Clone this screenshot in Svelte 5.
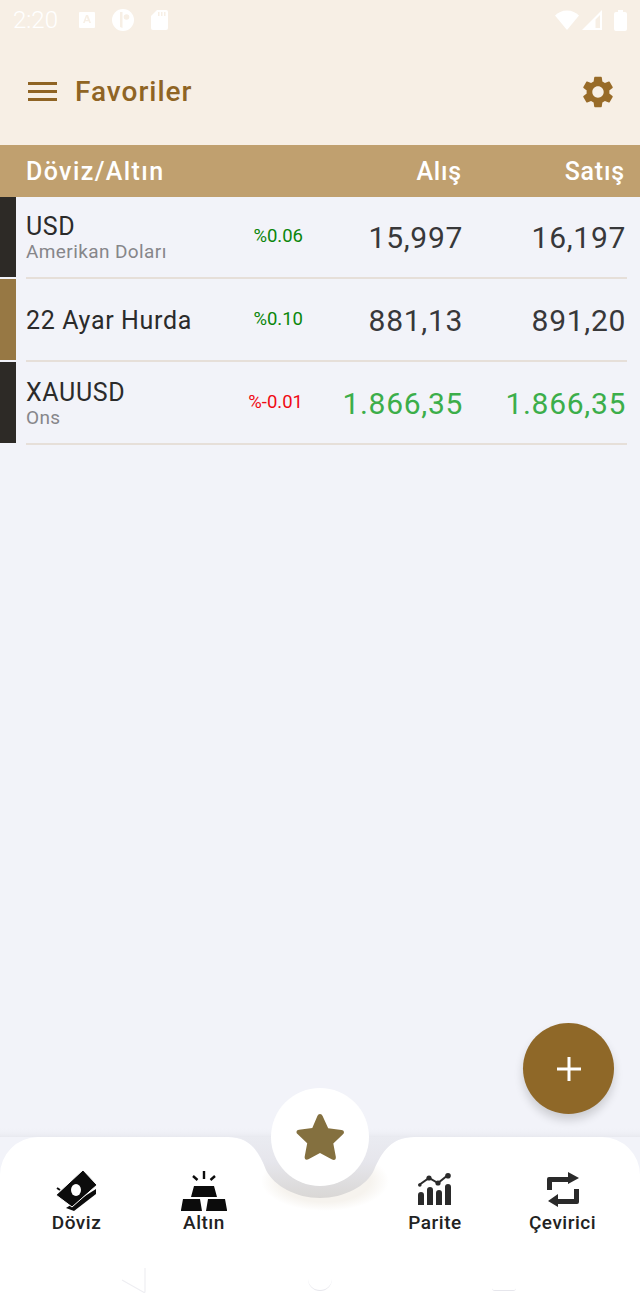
<script>
  const rows = [
    { code: 'USD', name: 'Amerikan Doları', pct: '%0.06', down: false, buy: '15,997', sell: '16,197', stripe: '#2d2a26', up: false },
    { code: '22 Ayar Hurda', name: '', pct: '%0.10', down: false, buy: '881,13', sell: '891,20', stripe: '#977844', up: false },
    { code: 'XAUUSD', name: 'Ons', pct: '%-0.01', down: true, buy: '1.866,35', sell: '1.866,35', stripe: '#2d2a26', up: true }
  ];
</script>

<div class="page">
  <header class="top">
    <div class="status">
      <span class="clock">2:20</span>
      <svg class="st-a" viewBox="0 0 16 16" width="16" height="16"><path fill="#fff" d="M1 0h14a1 1 0 0 1 1 1v14a1 1 0 0 1-1 1H1a1 1 0 0 1-1-1V1a1 1 0 0 1 1-1z"/><path fill="#f7efe5" d="M7 3h2l3 8h-1.700l-.6-1.800H6.300L5.700 11H4zm.8 1.900-1 3h2z"/></svg>
      <svg class="st-b" viewBox="0 0 22 22" width="22" height="22"><circle cx="11" cy="11" r="11" fill="#fff"/><path fill="#f7efe5" d="M8 3h2.500v16A8 8 0 0 1 8 18z"/><circle cx="14.500" cy="8" r="2.800" fill="#f7efe5"/></svg>
      <svg class="st-c" viewBox="0 0 17 20" width="17" height="20"><path fill="#fff" d="M6 0h9a2 2 0 0 1 2 2v16a2 2 0 0 1-2 2H2a2 2 0 0 1-2-2V6z"/><path fill="#f7efe5" d="M7 2h1.500v4H7zM10 2h1.500v4H10zM13 2h1.500v4H13z"/></svg>
      <span class="grow"></span>
      <svg viewBox="0 0 24 20" width="24" height="20"><path fill="#fff" d="M12 20 0 5.500C3 2.500 7 .500 12 .500s9 2 12 5z"/></svg>
      <svg class="st-sig" viewBox="0 0 20 20" width="20" height="20"><path fill="#fff" d="M20 0v20H0zM18 5l-4.500 4.500V18H18z"/></svg>
      <svg class="st-bat" viewBox="0 0 13 21" width="13" height="21"><path fill="#fff" d="M4 0h5v2h2a2 2 0 0 1 2 2v15a2 2 0 0 1-2 2H2a2 2 0 0 1-2-2V4a2 2 0 0 1 2-2h2z"/></svg>
    </div>
    <div class="toolbar">
      <div class="burger"><i></i><i></i><i></i></div>
      <span class="title">Favoriler</span>
      <span class="grow"></span>
      <svg class="gear" viewBox="0 0 24 24" width="38" height="38"><path fill="#986b28" d="M19.140 12.940c.04-.3.060-.61.060-.94 0-.32-.020-.64-.070-.94l2.030-1.580a.49.49 0 0 0 .12-.61l-1.920-3.320a.488.488 0 0 0-.59-.22l-2.390.96c-.5-.38-1.030-.7-1.620-.94l-.36-2.540a.484.484 0 0 0-.48-.41h-3.840c-.24 0-.43.17-.47.41l-.36 2.540c-.59.24-1.130.57-1.620.94l-2.390-.96c-.22-.08-.47 0-.59.22L2.740 8.870c-.12.21-.08.47.12.61l2.030 1.580c-.05.3-.09.63-.09.94s.02.64.07.94l-2.030 1.580a.49.49 0 0 0-.12.61l1.920 3.320c.12.22.37.29.59.22l2.390-.96c.5.38 1.030.7 1.620.94l.36 2.540c.05.24.24.41.48.41h3.840c.24 0 .44-.17.47-.41l.36-2.540c.59-.24 1.130-.56 1.620-.94l2.390.96c.22.08.47 0 .59-.22l1.920-3.320c.12-.22.07-.47-.12-.61l-2.010-1.580zM12 15.600c-1.980 0-3.600-1.620-3.600-3.600s1.620-3.600 3.600-3.600 3.600 1.620 3.600 3.600-1.620 3.600-3.600 3.600z"/></svg>
    </div>
  </header>

  <div class="thead">
    <span class="th-name">Döviz/Altın</span>
    <span class="th-buy">Alış</span>
    <span class="th-sell">Satış</span>
  </div>

  <div class="list">
    {#each rows as r}
      <div class="row">
        <div class="stripe" style="background: {r.stripe}"></div>
        <div class="cells">
          <div class="name">
            <span class="code">{r.code}</span>
            {#if r.name}<span class="sub">{r.name}</span>{/if}
          </div>
          <span class="pct" class:down={r.down}>{r.pct}</span>
          <span class="val buy" class:up={r.up}>{r.buy}</span>
          <span class="val sell" class:up={r.up}>{r.sell}</span>
        </div>
      </div>
    {/each}
  </div>

  <button class="fab" aria-label="Ekle">
    <svg viewBox="0 0 24 24" width="24" height="24"><path fill="#fff" d="M10.500 0h3v10.500H24v3H13.500V24h-3V13.500H0v-3h10.500z"/></svg>
  </button>

  <nav class="bottom">
    <svg class="nav-bg" viewBox="0 0 640 179" width="640" height="179">
      <defs>
        <linearGradient id="notch" x1="0" y1="0" x2="0" y2="1">
          <stop offset="0" stop-color="#eaebf1"/>
          <stop offset="0.4" stop-color="#e6e6ec"/>
          <stop offset="1" stop-color="#d9d7d5"/>
        </linearGradient>
        <radialGradient id="under">
          <stop offset="0.7" stop-color="#f6f3ee"/>
          <stop offset="1" stop-color="#ffffff"/>
        </radialGradient>
        <linearGradient id="edge" x1="0" y1="0" x2="0" y2="1">
          <stop offset="0" stop-color="#f2f3f9" stop-opacity="0"/>
          <stop offset="1" stop-color="#e8e9ef"/>
        </linearGradient>
      </defs>
      <rect x="0" y="-10" width="640" height="10" fill="url(#edge)"/>
      <path fill="#fff" d="M0 179V38A38 38 0 0 1 38 0H228C250 0 258 14 266 32L374 32C382 14 392 0 414 0H602A38 38 0 0 1 640 38V179z"/>
      <ellipse cx="325" cy="44" rx="64" ry="30" fill="url(#under)"/>
      <path fill="url(#notch)" d="M228 0C250 0 259 14 266 33C274 49 296 61 320 61C344 61 367 49 374 33C382 14 392 0 414 0z"/>
    </svg>

    <div class="tabs">
      <div class="tab">
        <svg viewBox="0 0 44 42" width="44" height="42">
          <path fill="#0c0c0c" d="M41 19v5L19 41l-8-3z"/>
          <path fill="#0c0c0c" stroke="#fff" stroke-width="1" d="M28 0 42 15 17 37 1 25z"/>
          <path stroke="#0c0c0c" stroke-width="2" d="M2 18l3 2"/>
          <ellipse cx="21" cy="20" rx="5" ry="6" fill="#fff"/>
        </svg>
        <span>Döviz</span>
      </div>
      <div class="tab">
        <svg viewBox="0 0 46 40" width="46" height="40" class="ic-gold">
          <path fill="#0c0c0c" d="M13 15h20l3 11H10zM2 28h17l2 12H0a1 1 0 0 1 0-1zM27 28h17l2 11v1H25z"/>
          <path stroke="#0c0c0c" stroke-width="2.400" fill="none" d="M23 0v8M12 5l4.500 4M34 5l-4.500 4"/>
        </svg>
        <span>Altın</span>
      </div>
      <div class="center-gap"></div>
      <div class="tab">
        <svg class="ic-chart" viewBox="0 0 34 32" width="34" height="32">
          <path stroke="#2a2a2a" stroke-width="2" fill="none" d="M1 12 11 5l9 5 10-8"/>
          <circle cx="11" cy="5" r="2.600" fill="#2a2a2a"/><circle cx="20" cy="10" r="2.600" fill="#2a2a2a"/><circle cx="30" cy="2.800" r="2.800" fill="#2a2a2a"/><circle cx="1.800" cy="12" r="1.800" fill="#2a2a2a"/>
          <path fill="#2a2a2a" d="M0 22a3 3 0 0 1 6 0v10H0zM9 17a3 3 0 0 1 6 0v15H9zM18 20a3 3 0 0 1 6 0v12h-6zM27 14a3 3 0 0 1 6 0v18h-6z"/>
        </svg>
        <span>Parite</span>
      </div>
      <div class="tab">
        <svg class="ic-swap" viewBox="0 0 34 35" width="34" height="35">
          <path fill="#2a2a2a" d="M1 18V7a2 2 0 0 1 2-2h19V0l11 6-11 6v-2H6v8zM33 17v13a2 2 0 0 1-2 2H12v3L2 29l10-7v5h16V17z"/>
        </svg>
        <span>Çevirici</span>
      </div>
    </div>

    <button class="star" aria-label="Favoriler">
      <svg viewBox="0 0 50 48" width="50" height="48"><path fill="#84703f" d="M25 1c1.300 0 2 .8 2.600 2l5.600 12.200 13.300 1.700c2.600.4 3.300 2.600 1.500 4.400l-9.700 9.200 2.500 13.200c.5 2.700-1.400 4-3.700 2.800L25 39.900l-11.600 6.400c-2.300 1.200-4.200-.1-3.700-2.800l2.500-13.200-9.700-9.200c-1.800-1.800-1.100-4 1.500-4.400l13.300-1.700L22.400 3c.6-1.200 1.300-2 2.600-2z"/></svg>
    </button>

    <div class="sysnav">
      <svg viewBox="0 0 26 27" width="26" height="27"><path fill="none" stroke="#eeeef2" stroke-width="1.200" d="M1 13 23 25.500a1 1 0 0 0 1-1V1"/></svg>
      <span class="sys-circle"></span>
      <span class="sys-square"></span>
    </div>
  </nav>
</div>

<style>
  :global(body) {
    margin: 0;
    background: #f2f3f9;
  }

  .page {
    position: relative;
    width: 640px;
    height: 1316px;
    overflow: hidden;
    display: flex;
    flex-direction: column;
    background: #f2f3f9;
    font-family: Roboto, sans-serif;
  }

  .grow {
    flex: 1;
  }

  .top {
    height: 145px;
    background: #f7efe5;
  }

  .status {
    height: 40px;
    display: flex;
    align-items: center;
    padding: 0 13px 0 13px;
  }

  .clock {
    color: #fff;
    font-size: 24px;
    width: 66px;
    font-weight: 300;
  }

  .st-b {
    margin-left: 17px;
  }

  .st-c {
    margin-left: 17px;
  }

  .st-sig {
    margin-left: 3px;
  }

  .st-bat {
    margin-left: 12px;
  }

  .toolbar {
    display: flex;
    align-items: center;
    height: 103px;
    padding: 0 23px 0 28px;
  }

  .burger {
    width: 29px;
    display: flex;
    flex-direction: column;
    gap: 5px;
    margin-right: 18px;
  }

  .burger i {
    display: block;
    height: 3px;
    background: #8f6424;
  }

  .title {
    color: #8f6424;
    font-size: 28px;
    font-weight: 500;
    letter-spacing: 1px;
  }

  .thead {
    height: 52px;
    background: #c0a06f;
    display: grid;
    grid-template-columns: 1fr 120px 163px;
    align-items: center;
    padding: 0 15px 0 26px;
    color: #fff;
    font-size: 25px;
    font-weight: 500;
  }

  .th-name {
    letter-spacing: 1.4px;
  }

  .th-buy,
  .th-sell {
    text-align: right;
    letter-spacing: 0.8px;
  }

  .row {
    display: flex;
    height: 83px;
  }

  .stripe {
    width: 16px;
    height: 80px;
  }

  .row + .row .stripe {
    height: 81px;
    margin-top: -1px;
  }

  .cells {
    flex: 1;
    box-sizing: border-box;
    margin-left: 10px;
    margin-right: 13px;
    height: 82px;
    border-bottom: 2px solid #e6dfd9;
    display: grid;
    grid-template-columns: 1fr 72px 160px 163px;
    align-items: center;
  }

  .name {
    display: flex;
    flex-direction: column;
  }

  .code {
    font-size: 25px;
    line-height: 29px;
    color: #2b2b2b;
    letter-spacing: 0.65px;
  }

  .sub {
    font-size: 19px;
    line-height: 22px;
    color: #86868a;
    letter-spacing: 0.4px;
  }

  .pct {
    font-size: 18.500px;
    color: #0b860b;
    text-align: right;
    margin: 0 1px 2px 0;
  }

  .pct.down {
    color: #f00a14;
  }

  .val {
    font-size: 30px;
    color: #38383a;
    text-align: right;
    letter-spacing: 0.7px;
    margin-right: 1px;
  }

  .val.up {
    color: #3cae4a;
  }

  .fab {
    position: absolute;
    left: 523px;
    top: 1023px;
    width: 91px;
    height: 91px;
    border: none;
    padding: 0;
    border-radius: 50%;
    background: #8f6828;
    display: flex;
    align-items: center;
    justify-content: center;
    box-shadow: 0 6px 10px rgba(0, 0, 0, 0.16);
  }

  .bottom {
    position: absolute;
    left: 0;
    right: 0;
    bottom: 0;
    height: 179px;
  }

  .nav-bg {
    position: absolute;
    left: 0;
    top: 0;
    overflow: visible;
  }

  .tabs {
    position: relative;
    display: grid;
    grid-template-columns: 153px 102px 116px 128px 127px;
    padding-top: 31px;
  }

  .center-gap {
    width: 100%;
  }

  .tab {
    display: flex;
    flex-direction: column;
    align-items: center;
    height: 66px;
    justify-content: flex-end;
    color: #222;
    font-size: 19px;
    font-weight: 500;
    line-height: 22px;
    letter-spacing: 0.5px;
  }

  .ic-gold {
    margin-bottom: 1px;
  }

  .ic-chart {
    margin-bottom: 7px;
  }

  .ic-swap {
    margin-bottom: 5px;
  }

  .star {
    position: absolute;
    left: 271px;
    top: -49px;
    width: 98px;
    height: 98px;
    padding: 0;
    border: none;
    border-radius: 50%;
    background: #fff;
    display: flex;
    align-items: center;
    justify-content: center;
  }

  .sysnav {
    position: absolute;
    left: 0;
    right: 0;
    top: 130px;
  }

  .sysnav svg,
  .sys-circle,
  .sys-square {
    position: absolute;
    box-sizing: border-box;
  }

  .sysnav svg {
    left: 121px;
    top: 0;
  }

  .sys-circle {
    left: 308px;
    top: 0;
    width: 24px;
    height: 24px;
    border-radius: 50%;
    background: #fff;
    border-bottom: 1px solid #e6e6ec;
  }

  .sys-square {
    left: 492px;
    top: 0;
    width: 24px;
    height: 24px;
    border-radius: 3px;
    background: #fff;
    border-bottom: 1.500px solid #e6e6ec;
  }
</style>
